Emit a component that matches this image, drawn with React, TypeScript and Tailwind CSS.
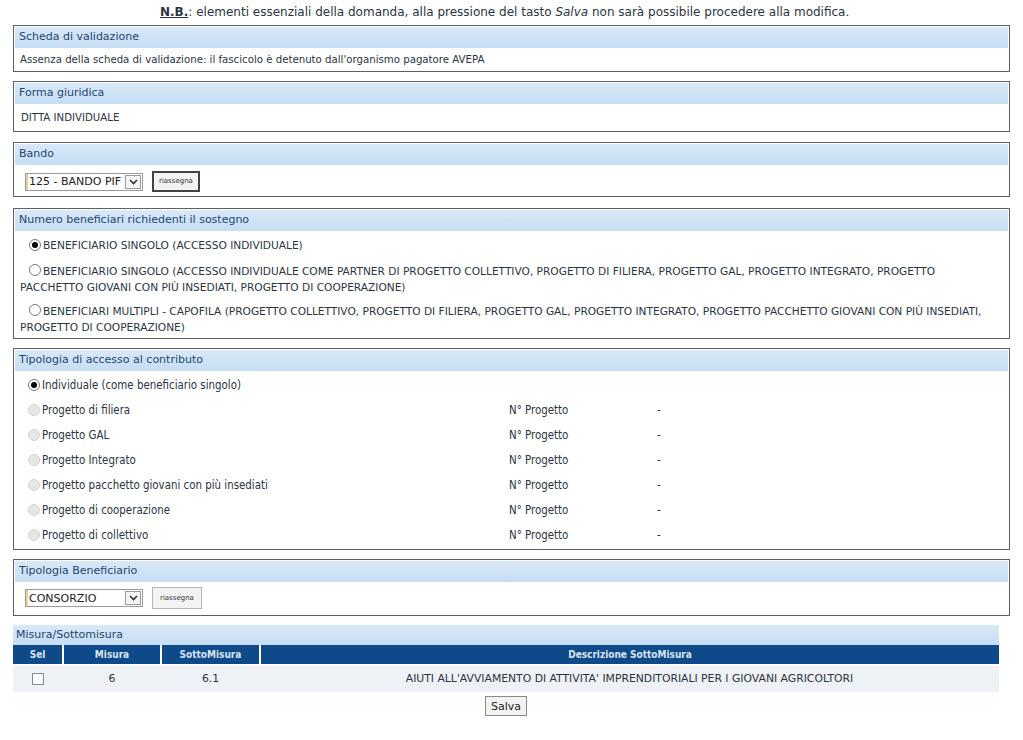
import type { ReactNode } from "react";

const FONT = { fontFamily: '"DejaVu Sans", Verdana, sans-serif' };
const NARROW = { fontFamily: '"DejaVu Sans Condensed", "Liberation Sans", Tahoma, sans-serif' };

function Section({ title, children, className = "" }: { title: string; children: ReactNode; className?: string }) {
  return (
    <div className={`mx-[13px] border border-[#5f5f5f] bg-white p-px ${className}`}>
      <div className="flex h-[21px] items-center bg-gradient-to-b from-[#d9e9f8] to-[#c6ddf3] pl-[4px] text-[11px] text-[#23476f]">
        {title}
      </div>
      {children}
    </div>
  );
}

function Radio({ checked = false, disabled = false }: { checked?: boolean; disabled?: boolean }) {
  return (
    <span
      className={`mr-[2px] inline-flex h-[12px] w-[12px] shrink-0 items-center justify-center rounded-full border ${
        disabled ? "border-[#d4d4d4] bg-[#e6e6e6]" : "border-[#7a7a7a] bg-white"
      }`}
    >
      {checked ? <span className="h-[6px] w-[6px] rounded-full bg-black" /> : null}
    </span>
  );
}

function FakeSelect({ value }: { value: string }) {
  return (
    <div className="flex h-[18px] w-[118px] items-center border border-[#9a9a9a] bg-white text-[11px] text-[#222]">
      <span className="h-full w-[2px] bg-[#e2d39a]" />
      <span className="flex-1 overflow-hidden whitespace-nowrap pl-[1px] leading-none">{value}</span>
      <span className="mr-[1px] flex h-[14px] w-[16px] shrink-0 items-center justify-center border border-[#9a9a9a] bg-[#f4f4f4]">
        <svg width="9" height="6" viewBox="0 0 9 6" aria-hidden>
          <path d="M1 1l3.5 3.5L8 1" fill="none" stroke="#333" strokeWidth="1.6" />
        </svg>
      </span>
    </div>
  );
}

function SmallButton({ dark = false }: { dark?: boolean }) {
  return (
    <button
      type="button"
      className={`bg-[#f3f3f3] text-[7px] leading-none text-[#333] ${
        dark ? "h-[21px] border-2 border-[#444] px-[5px]" : "h-[22px] border border-[#b5b5b5] px-[7px]"
      }`}
    >
      riassegna
    </button>
  );
}

const accessRows = [
  "Progetto di filiera",
  "Progetto GAL",
  "Progetto Integrato",
  "Progetto pacchetto giovani con più insediati",
  "Progetto di cooperazione",
  "Progetto di collettivo",
];

export default function App() {
  return (
    <div className="h-[740px] w-[1023px] overflow-hidden bg-white text-[#2b3440]" style={FONT}>
      <p className="h-[25px] pl-[160px] pt-[5px] text-[12px] leading-[15px] text-[#2b3440]">
        <span className="font-bold underline">N.B.</span>: elementi essenziali della domanda, alla pressione del tasto{" "}
        <i>Salva</i> non sarà possibile procedere alla modifica.
      </p>

      <Section title="Scheda di validazione" className="h-[47px]">
        <div className="pl-[5px] pt-[6px] text-[10.2px] leading-[12px]">
          Assenza della scheda di validazione: il fascicolo è detenuto dall'organismo pagatore AVEPA
        </div>
      </Section>

      <Section title="Forma giuridica" className="mt-[9px] h-[51px]">
        <div className="pl-[6px] pt-[8px] text-[10.2px] leading-[12px]">DITTA INDIVIDUALE</div>
      </Section>

      <Section title="Bando" className="mt-[10px] h-[55px]">
        <div className="flex items-center gap-[9px] pl-[10px] pt-[6px]">
          <FakeSelect value="125 - BANDO PIF" />
          <SmallButton dark />
        </div>
      </Section>

      <Section title="Numero beneficiari richiedenti il sostegno" className="mt-[11px] h-[131px]">
        <div className="pl-[5px] pr-[12px] text-[10.6px] leading-[16px]">
          <div className="mt-[6px] flex items-center pl-[9px]">
            <Radio checked />
            BENEFICIARIO SINGOLO (ACCESSO INDIVIDUALE)
          </div>
          <div className="mt-[10px]">
            <span className="inline-flex pl-[9px] align-[-1px]">
              <Radio />
            </span>
            BENEFICIARIO SINGOLO (ACCESSO INDIVIDUALE COME PARTNER DI PROGETTO COLLETTIVO, PROGETTO DI FILIERA, PROGETTO GAL,
            PROGETTO INTEGRATO, PROGETTO PACCHETTO GIOVANI CON PIÙ INSEDIATI, PROGETTO DI COOPERAZIONE)
          </div>
          <div className="mt-[8px]">
            <span className="inline-flex pl-[9px] align-[-1px]">
              <Radio />
            </span>
            BENEFICIARI MULTIPLI - CAPOFILA (PROGETTO COLLETTIVO, PROGETTO DI FILIERA, PROGETTO GAL, PROGETTO INTEGRATO,
            PROGETTO PACCHETTO GIOVANI CON PIÙ INSEDIATI, PROGETTO DI COOPERAZIONE)
          </div>
        </div>
      </Section>

      <Section title="Tipologia di accesso al contributo" className="mt-[9px] h-[202px]">
        <div className="pl-[13px] pt-px text-[11.4px] leading-[14px]" style={NARROW}>
          <div className="flex h-[25px] items-center">
            <Radio checked />
            Individuale (come beneficiario singolo)
          </div>
          {accessRows.map((label) => (
            <div key={label} className="flex h-[25px] items-center">
              <span className="flex w-[481px] items-center">
                <Radio disabled />
                {label}
              </span>
              <span className="w-[148px]">N° Progetto</span>
              <span>-</span>
            </div>
          ))}
        </div>
      </Section>

      <Section title="Tipologia Beneficiario" className="mt-[9px] h-[57px]">
        <div className="flex items-center gap-[9px] pl-[10px] pt-[5px]">
          <FakeSelect value="CONSORZIO" />
          <SmallButton />
        </div>
      </Section>

      <div className="ml-[13px] mt-[9px] w-[986px]">
        <div className="flex h-[20px] items-center bg-gradient-to-b from-[#d9e9f8] to-[#c6ddf3] pl-[3px] text-[11px] text-[#23476f]">
          Misura/Sottomisura
        </div>
        <table className="w-full border-collapse text-[10.8px]">
          <thead>
            <tr className="h-[20px] bg-[#0e4a8a] text-[10px] font-bold text-[#dbe6f2]" style={NARROW}>
              <th className="w-[50px] border-r-2 border-white font-bold">Sel</th>
              <th className="w-[98px] border-r-2 border-white font-bold">Misura</th>
              <th className="w-[99px] border-r-2 border-white font-bold">SottoMisura</th>
              <th className="font-bold">Descrizione SottoMisura</th>
            </tr>
          </thead>
          <tbody>
            <tr className="h-[27px] border-t-2 border-white bg-[#eef1f5] text-center">
              <td>
                <span className="inline-block h-[12px] w-[12px] border border-[#8a8a8a] bg-white align-middle" />
              </td>
              <td>6</td>
              <td>6.1</td>
              <td>AIUTI ALL'AVVIAMENTO DI ATTIVITA' IMPRENDITORIALI PER I GIOVANI AGRICOLTORI</td>
            </tr>
          </tbody>
        </table>
        <div className="flex justify-center pt-[4px]">
          <button
            type="button"
            className="h-[20px] border border-[#8a8a8a] bg-[#f2f2f2] px-[5px] text-[11px] leading-none text-[#222]"
          >
            Salva
          </button>
        </div>
      </div>
    </div>
  );
}
